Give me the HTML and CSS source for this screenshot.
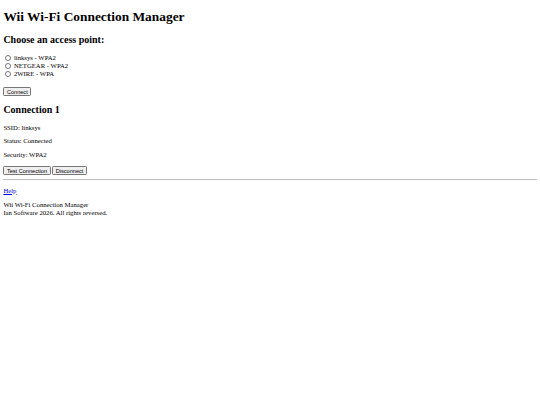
FILE: index.html
```html
<!DOCTYPE html>
<html lang="en">
  <head>
    <title>Wii Wi-Fi Connection Manager</title>
    <link rel="stylesheet" href="styles.css">
  </head>
  <body>
    <h1>Wii Wi-Fi Connection Manager</h1>

    <h2>Choose an access point:</h2>
    <form class="ap-form">
      <label><input type="radio" name="ap" value="linksys" /> linksys - WPA2</label><br />
      <label><input type="radio" name="ap" value="NETGEAR" /> NETGEAR - WPA2</label><br />
      <label><input type="radio" name="ap" value="2WIRE" /> 2WIRE - WPA</label><br />
      <p class="connect-row"><button type="button" class="btn">Connect</button></p>
    </form>

    <h2>Connection 1</h2>
    <p>SSID: linksys</p>
    <p>Status: Connected</p>
    <p>Security: WPA2</p>
    <div class="actions">
      <button class="btn">Test Connection</button>
      <button class="btn">Disconnect</button>
    </div>

    <hr />
    <p class="help"><a href="#">Help</a></p>
    <p class="footer">Wii Wi-Fi Connection Manager<br />Ian Software 2026. All rights reversed.</p>
  </body>
</html>
```

FILE: styles.css
```css
body {
  font-family: "Liberation Serif", "Times New Roman", serif;
  font-size: 6.7px;
  margin: 3.4px;
  color: black;
}

h1 {
  font-size: 13.4px;
  margin: 6px 0 9px;
}

h2 {
  font-size: 10px;
  margin: 8.3px 0;
}

p {
  margin: 6.7px 0;
}

a {
  color: #0000ee;
}

/* access point list */
.ap-form {
  line-height: 8px;
}
.ap-form input[type="radio"] {
  width: 5.5px;
  height: 5.5px;
  margin: 1.3px 1.3px 0 2.1px;
  vertical-align: -1px;
}
.connect-row {
  margin-top: 9.5px;
}

/* buttons */
.btn {
  font-family: "Liberation Sans", Arial, sans-serif;
  font-size: 5.6px;
  line-height: normal;
  padding: 0.4px 2.5px;
  border: 0.8px solid #767676;
  border-radius: 1.3px;
  background-color: #efefef;
  color: black;
}
.actions {
  margin-top: 8.5px;
}

hr {
  border: none;
  border-top: 1px solid #c0c0c0;
  margin: 4px 0 2px;
}

.footer {
  line-height: 8px;
  margin-top: 6.7px;
}
```
